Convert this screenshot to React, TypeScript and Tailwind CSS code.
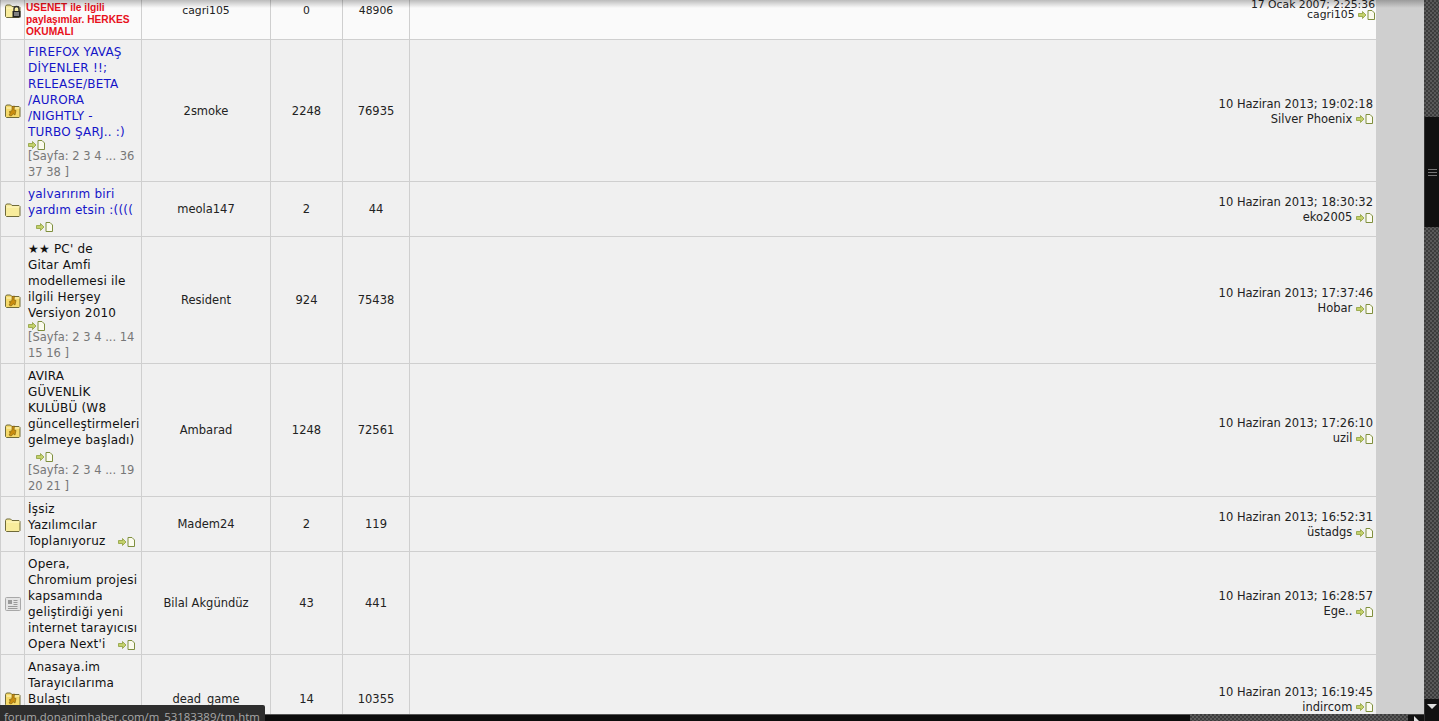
import React from 'react';

type FolderKind = 'lock' | 'hot' | 'plain' | 'news';

interface Topic {
  kind: FolderKind;
  title: React.ReactNode;
  blue?: boolean;
  pages?: string;
  inlineIcon?: 'wrap' | 'inset' | 'end';
  author: string;
  replies: string;
  views: string;
  date: string;
  last: string;
  height: string;
}

const topics: Topic[] = [
  {
    kind: 'hot', blue: true, inlineIcon: 'wrap', height: 'h-[142px]',
    title: <>FIREFOX YAVAŞ<br />DİYENLER !!;<br />RELEASE/BETA<br />/AURORA<br />/NIGHTLY -<br />TURBO ŞARJ.. :)</>,
    pages: '[Sayfa: 2 3 4 ... 36 37 38 ]',
    author: '2smoke', replies: '2248', views: '76935', date: '10 Haziran 2013; 19:02:18', last: 'Silver Phoenix',
  },
  {
    kind: 'plain', blue: true, inlineIcon: 'inset', height: 'h-[55px]',
    title: <>yalvarırım biri<br />yardım etsin :((((</>,
    author: 'meola147', replies: '2', views: '44', date: '10 Haziran 2013; 18:30:32', last: 'eko2005',
  },
  {
    kind: 'hot', inlineIcon: 'wrap', height: 'h-[127px]',
    title: <>★★ PC' de<br />Gitar Amfi<br />modellemesi ile<br />ilgili Herşey<br />Versiyon 2010</>,
    pages: '[Sayfa: 2 3 4 ... 14 15 16 ]',
    author: 'Resident', replies: '924', views: '75438', date: '10 Haziran 2013; 17:37:46', last: 'Hobar',
  },
  {
    kind: 'hot', inlineIcon: 'inset', height: 'h-[133px]',
    title: <>AVIRA<br />GÜVENLİK<br />KULÜBÜ (W8<br />güncelleştirmeleri<br />gelmeye başladı)</>,
    pages: '[Sayfa: 2 3 4 ... 19 20 21 ]',
    author: 'Ambarad', replies: '1248', views: '72561', date: '10 Haziran 2013; 17:26:10', last: 'uzil',
  },
  {
    kind: 'plain', inlineIcon: 'end', height: 'h-[55px]',
    title: <>İşsiz<br />Yazılımcılar<br />Toplanıyoruz</>,
    author: 'Madem24', replies: '2', views: '119', date: '10 Haziran 2013; 16:52:31', last: 'üstadgs',
  },
  {
    kind: 'news', inlineIcon: 'end', height: 'h-[103px]',
    title: <>Opera,<br />Chromium projesi<br />kapsamında<br />geliştirdiği yeni<br />internet tarayıcısı<br />Opera Next'i</>,
    author: 'Bilal Akgündüz', replies: '43', views: '441', date: '10 Haziran 2013; 16:28:57', last: 'Ege..',
  },
  {
    kind: 'hot', height: 'h-[88px]',
    title: <>Anasaya.im<br />Tarayıcılarıma<br />Bulaştı</>,
    author: 'dead_game', replies: '14', views: '10355', date: '10 Haziran 2013; 16:19:45', last: 'indircom',
  },
];

const FolderIcon = ({ kind }: { kind: FolderKind }) => {
  if (kind === 'news') {
    return (
      <svg width="16" height="14" viewBox="0 0 16 14" className="inline-block">
        <rect x="0.5" y="0.5" width="15" height="13" rx="1" fill="#e4e4e4" stroke="#a8a8a8" />
        <rect x="3" y="3" width="4" height="4" fill="#9a9a9a" />
        <path d="M8.5 3.5h4M8.5 5.5h4M8.5 7.5h4M3 9.5h9.5M3 11.5h9.5" stroke="#9a9a9a" />
      </svg>
    );
  }
  const fill = kind === 'hot' ? '#f5d96a' : '#f8ec9c';
  return (
    <svg width="16" height="14" viewBox="0 0 16 14" className="inline-block">
      <path d="M0.5 12.5V2.5l1-1.5h4l1.5 1.5h7l1 1v9l-1 1H1.5z" fill={fill} stroke="#6f6a3a" />
      <path d="M1.5 4h13" stroke="#fff7c4" />
      {kind === 'hot' && (
        <path d="M7 2.5 9.5 2 9 6l2 .5L10 11l-1.5-1L6 12l-2-1 1.5-2.5L4 8l3-1.5z" fill="#c98d10" stroke="#7a5a0c" strokeWidth="0.6" />
      )}
      {kind === 'lock' && (
        <>
          <path d="M9 7V5a2.5 2.5 0 0 1 5 0v2" fill="none" stroke="#333" strokeWidth="1.4" />
          <rect x="7.5" y="7" width="8" height="6.5" fill="#222" />
          <path d="M9 9h5M9 11h5" stroke="#ddd" />
        </>
      )}
    </svg>
  );
};

const NewestIcon = ({ className = 'inline-block' }: { className?: string }) => (
  <svg width="17" height="10" viewBox="0 0 17 10" className={className}>
    <path d="M0.5 3.5h4V1.5L8 5 4.5 8.5v-2h-4z" fill="#c3d06a" stroke="#83952c" strokeWidth="0.7" />
    <path d="M10 0.5h4l2.5 2.5v6.5H10z" fill="#fbfbee" stroke="#7f8f3e" />
  </svg>
);

const cell = 'border border-[#cfcfcf] pt-[2px] text-center align-middle';

const TopicRow = ({ t }: { t: Topic }) => (
  <tr className={`bg-[#f0f0f0] ${t.height}`}>
    <td className="border border-[#cfcfcf] px-0 text-center align-middle">
      <FolderIcon kind={t.kind} />
    </td>
    <td className="border border-[#cfcfcf] pl-[3px] pr-0 pt-[4px] text-left align-top">
      <div className={`text-[12px] leading-[16px] tracking-[0.2px] ${t.blue ? 'text-[#1414c8]' : 'text-[#111]'}`}>
        {t.title}
        {t.inlineIcon === 'end' && <NewestIcon className="ml-[12px] inline-block" />}
      </div>
      {t.inlineIcon === 'wrap' && <div className="h-[8px]"><NewestIcon className="block" /></div>}
      {t.inlineIcon === 'inset' && <div className="h-[14px] pl-[8px] pt-[4px]"><NewestIcon className="block" /></div>}
      {t.pages && <div className="text-[11.5px] leading-[16px] text-[#777]">{t.pages}</div>}
    </td>
    <td className={`${cell} text-[11.5px] text-[#222]`}>{t.author}</td>
    <td className={`${cell} text-[11.5px] text-[#222]`}>{t.replies}</td>
    <td className={`${cell} text-[11.5px] text-[#222]`}>{t.views}</td>
    <td className="border border-y-[#cfcfcf] border-l-[#cfcfcf] border-r-0 pr-[3px] pt-[2px] text-right align-middle text-[11.5px] leading-[15px] text-[#222]">
      {t.date}
      <br />
      {t.last} <NewestIcon />
    </td>
  </tr>
);

export default function App() {
  return (
    <div className="relative flex h-screen w-full overflow-hidden bg-[#cfcfcf] font-['DejaVu_Sans',Verdana,sans-serif]">
      <div className="w-[1376px] shrink-0">
        <table className="-mt-[20px] w-[1376px] table-fixed border-collapse">
          <colgroup>
            <col className="w-[24px]" />
            <col className="w-[117px]" />
            <col className="w-[129px]" />
            <col className="w-[72px]" />
            <col className="w-[67px]" />
            <col />
          </colgroup>
          <tbody>
            <tr className="h-[59px] bg-[#fafafa]">
              <td className="border border-[#cfcfcf] text-center align-middle"><FolderIcon kind="lock" /></td>
              <td className="border border-[#cfcfcf] pb-[1px] pl-[1px] text-left align-bottom font-['Liberation_Sans',Arial,sans-serif] text-[10.2px] font-bold leading-[12px] text-[#e8101a]">
                USENET ile ilgili<br />paylaşımlar. HERKES<br />OKUMALI
              </td>
              <td className={`${cell} text-[10.8px] text-[#222]`}>cagri105</td>
              <td className={`${cell} text-[10.8px] text-[#222]`}>0</td>
              <td className={`${cell} text-[10.8px] text-[#222]`}>48906</td>
              <td className="border border-y-[#cfcfcf] border-l-[#cfcfcf] border-r-0 pr-[1px] text-right align-middle text-[10.8px] leading-[10px] text-[#222]">
                17 Ocak 2007; 2:25:36
                <br />
                cagri105 <NewestIcon className="inline-block align-[-2px]" />
              </td>
            </tr>
            {topics.map((t) => (
              <TopicRow key={t.author} t={t} />
            ))}
          </tbody>
        </table>
      </div>
      <div className="flex-1" />
      {/* dark scrollbar */}
      <div className="flex w-[15px] shrink-0 flex-col bg-[repeating-conic-gradient(#5a5a5a_0_25%,#3c3c3c_0_50%)] bg-[length:4px_4px]">
        <div className="h-[117px]" />
        <div className="flex h-[110px] items-center justify-center border-l border-[#333] bg-[#101010]">
          <div className="h-[7px] w-[9px] border-y border-[#777] bg-[linear-gradient(#101010_2px,#777_2px,#777_3px,#101010_3px)]" />
        </div>
        <div className="flex-1" />
        <div className="flex h-[22px] justify-center border-l border-[#333] bg-[#111] pt-[5px]">
          <div className="h-0 w-0 border-x-[5px] border-t-[5px] border-x-transparent border-t-[#ddd]" />
        </div>
      </div>
      {/* sticky header shadow */}
      <div className="pointer-events-none absolute left-0 top-0 h-[8px] w-[1424px] bg-gradient-to-b from-black/25 to-transparent" />
      {/* horizontal scrollbar */}
      <div className="absolute bottom-0 left-0 flex h-[7px] w-[1424px] bg-[repeating-conic-gradient(#5a5a5a_0_25%,#3c3c3c_0_50%)] bg-[length:4px_4px]">
        <div className="h-full w-[1190px] border-t border-[#555] bg-[#0c0c0c]" />
        <div className="flex-1" />
        <div className="h-full w-[16px] border-t border-[#444] bg-[#111] pl-[6px] pt-[1px]">
          <div className="h-0 w-0 border-y-[5px] border-l-[5px] border-y-transparent border-l-[#ddd]" />
        </div>
      </div>
      {/* status bubble */}
      <div className="absolute bottom-0 left-0 h-[16px] w-[265px] overflow-hidden rounded-tr-[2px] bg-[#2e2e2e] pl-[4px] pt-[3px] font-['Open_Sans',sans-serif] text-[11.4px] leading-[17px] whitespace-nowrap text-[#a8a8a8]">
        forum.donanimhaber.com/m_53183389/tm.htm
      </div>
    </div>
  );
}
